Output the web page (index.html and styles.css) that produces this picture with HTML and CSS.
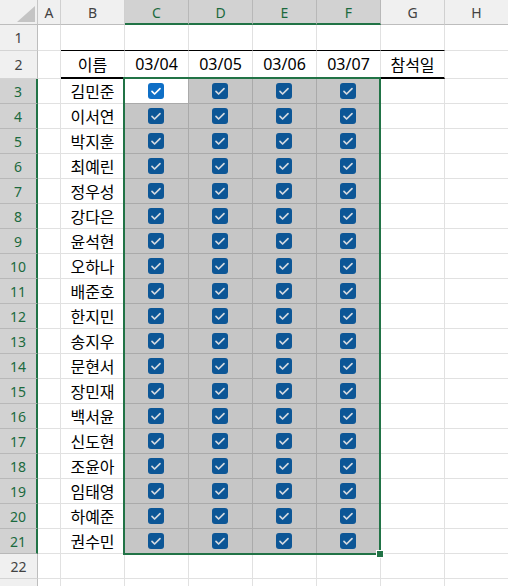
FILE: index.html
```html
<!DOCTYPE html>
<html lang="ko">
<head>
<meta charset="utf-8">
<title>출석부</title>
<link rel="stylesheet" href="styles.css">
</head>
<body>
<svg class="defs" aria-hidden="true">
  <symbol id="chk" viewBox="0 0 16 16">
    <rect class="box" x="0" y="0" width="16" height="16" rx="3"/>
    <path class="tick" d="M4 8.4 L6.6 11 L12 5.6"/>
  </symbol>
</svg>
<div class="sheet">
  <div class="corner"><svg class="tri" viewBox="0 0 18 16"><polygon points="18,0 18,16 0,16"/></svg></div>
  <div class="ch">A</div><div class="ch">B</div><div class="ch sel">C</div><div class="ch sel">D</div><div class="ch sel">E</div><div class="ch sel">F</div><div class="ch">G</div><div class="ch">H</div>

  <div class="rh">1</div><div class="c"></div><div class="c b1"></div><div class="c b1"></div><div class="c b1"></div><div class="c b1"></div><div class="c b1"></div><div class="c b1"></div><div class="c"></div>

  <div class="rh">2</div><div class="c"></div><div class="c hb">이름</div><div class="c hb">03/04</div><div class="c hb">03/05</div><div class="c hb">03/06</div><div class="c hb">03/07</div><div class="c hb">참석일</div><div class="c"></div>

  <div class="rh sel">3</div><div class="c"></div><div class="c">김민준</div><div class="c act"><svg class="cb"><use href="#chk"/></svg></div><div class="c s"><svg class="cb"><use href="#chk"/></svg></div><div class="c s"><svg class="cb"><use href="#chk"/></svg></div><div class="c s"><svg class="cb"><use href="#chk"/></svg></div><div class="c"></div><div class="c"></div>
  <div class="rh sel">4</div><div class="c"></div><div class="c">이서연</div><div class="c s"><svg class="cb"><use href="#chk"/></svg></div><div class="c s"><svg class="cb"><use href="#chk"/></svg></div><div class="c s"><svg class="cb"><use href="#chk"/></svg></div><div class="c s"><svg class="cb"><use href="#chk"/></svg></div><div class="c"></div><div class="c"></div>
  <div class="rh sel">5</div><div class="c"></div><div class="c">박지훈</div><div class="c s"><svg class="cb"><use href="#chk"/></svg></div><div class="c s"><svg class="cb"><use href="#chk"/></svg></div><div class="c s"><svg class="cb"><use href="#chk"/></svg></div><div class="c s"><svg class="cb"><use href="#chk"/></svg></div><div class="c"></div><div class="c"></div>
  <div class="rh sel">6</div><div class="c"></div><div class="c">최예린</div><div class="c s"><svg class="cb"><use href="#chk"/></svg></div><div class="c s"><svg class="cb"><use href="#chk"/></svg></div><div class="c s"><svg class="cb"><use href="#chk"/></svg></div><div class="c s"><svg class="cb"><use href="#chk"/></svg></div><div class="c"></div><div class="c"></div>
  <div class="rh sel">7</div><div class="c"></div><div class="c">정우성</div><div class="c s"><svg class="cb"><use href="#chk"/></svg></div><div class="c s"><svg class="cb"><use href="#chk"/></svg></div><div class="c s"><svg class="cb"><use href="#chk"/></svg></div><div class="c s"><svg class="cb"><use href="#chk"/></svg></div><div class="c"></div><div class="c"></div>
  <div class="rh sel">8</div><div class="c"></div><div class="c">강다은</div><div class="c s"><svg class="cb"><use href="#chk"/></svg></div><div class="c s"><svg class="cb"><use href="#chk"/></svg></div><div class="c s"><svg class="cb"><use href="#chk"/></svg></div><div class="c s"><svg class="cb"><use href="#chk"/></svg></div><div class="c"></div><div class="c"></div>
  <div class="rh sel">9</div><div class="c"></div><div class="c">윤석현</div><div class="c s"><svg class="cb"><use href="#chk"/></svg></div><div class="c s"><svg class="cb"><use href="#chk"/></svg></div><div class="c s"><svg class="cb"><use href="#chk"/></svg></div><div class="c s"><svg class="cb"><use href="#chk"/></svg></div><div class="c"></div><div class="c"></div>
  <div class="rh sel">10</div><div class="c"></div><div class="c">오하나</div><div class="c s"><svg class="cb"><use href="#chk"/></svg></div><div class="c s"><svg class="cb"><use href="#chk"/></svg></div><div class="c s"><svg class="cb"><use href="#chk"/></svg></div><div class="c s"><svg class="cb"><use href="#chk"/></svg></div><div class="c"></div><div class="c"></div>
  <div class="rh sel">11</div><div class="c"></div><div class="c">배준호</div><div class="c s"><svg class="cb"><use href="#chk"/></svg></div><div class="c s"><svg class="cb"><use href="#chk"/></svg></div><div class="c s"><svg class="cb"><use href="#chk"/></svg></div><div class="c s"><svg class="cb"><use href="#chk"/></svg></div><div class="c"></div><div class="c"></div>
  <div class="rh sel">12</div><div class="c"></div><div class="c">한지민</div><div class="c s"><svg class="cb"><use href="#chk"/></svg></div><div class="c s"><svg class="cb"><use href="#chk"/></svg></div><div class="c s"><svg class="cb"><use href="#chk"/></svg></div><div class="c s"><svg class="cb"><use href="#chk"/></svg></div><div class="c"></div><div class="c"></div>
  <div class="rh sel">13</div><div class="c"></div><div class="c">송지우</div><div class="c s"><svg class="cb"><use href="#chk"/></svg></div><div class="c s"><svg class="cb"><use href="#chk"/></svg></div><div class="c s"><svg class="cb"><use href="#chk"/></svg></div><div class="c s"><svg class="cb"><use href="#chk"/></svg></div><div class="c"></div><div class="c"></div>
  <div class="rh sel">14</div><div class="c"></div><div class="c">문현서</div><div class="c s"><svg class="cb"><use href="#chk"/></svg></div><div class="c s"><svg class="cb"><use href="#chk"/></svg></div><div class="c s"><svg class="cb"><use href="#chk"/></svg></div><div class="c s"><svg class="cb"><use href="#chk"/></svg></div><div class="c"></div><div class="c"></div>
  <div class="rh sel">15</div><div class="c"></div><div class="c">장민재</div><div class="c s"><svg class="cb"><use href="#chk"/></svg></div><div class="c s"><svg class="cb"><use href="#chk"/></svg></div><div class="c s"><svg class="cb"><use href="#chk"/></svg></div><div class="c s"><svg class="cb"><use href="#chk"/></svg></div><div class="c"></div><div class="c"></div>
  <div class="rh sel">16</div><div class="c"></div><div class="c">백서윤</div><div class="c s"><svg class="cb"><use href="#chk"/></svg></div><div class="c s"><svg class="cb"><use href="#chk"/></svg></div><div class="c s"><svg class="cb"><use href="#chk"/></svg></div><div class="c s"><svg class="cb"><use href="#chk"/></svg></div><div class="c"></div><div class="c"></div>
  <div class="rh sel">17</div><div class="c"></div><div class="c">신도현</div><div class="c s"><svg class="cb"><use href="#chk"/></svg></div><div class="c s"><svg class="cb"><use href="#chk"/></svg></div><div class="c s"><svg class="cb"><use href="#chk"/></svg></div><div class="c s"><svg class="cb"><use href="#chk"/></svg></div><div class="c"></div><div class="c"></div>
  <div class="rh sel">18</div><div class="c"></div><div class="c">조윤아</div><div class="c s"><svg class="cb"><use href="#chk"/></svg></div><div class="c s"><svg class="cb"><use href="#chk"/></svg></div><div class="c s"><svg class="cb"><use href="#chk"/></svg></div><div class="c s"><svg class="cb"><use href="#chk"/></svg></div><div class="c"></div><div class="c"></div>
  <div class="rh sel">19</div><div class="c"></div><div class="c">임태영</div><div class="c s"><svg class="cb"><use href="#chk"/></svg></div><div class="c s"><svg class="cb"><use href="#chk"/></svg></div><div class="c s"><svg class="cb"><use href="#chk"/></svg></div><div class="c s"><svg class="cb"><use href="#chk"/></svg></div><div class="c"></div><div class="c"></div>
  <div class="rh sel">20</div><div class="c"></div><div class="c">하예준</div><div class="c s"><svg class="cb"><use href="#chk"/></svg></div><div class="c s"><svg class="cb"><use href="#chk"/></svg></div><div class="c s"><svg class="cb"><use href="#chk"/></svg></div><div class="c s"><svg class="cb"><use href="#chk"/></svg></div><div class="c"></div><div class="c"></div>
  <div class="rh sel">21</div><div class="c"></div><div class="c">권수민</div><div class="c s"><svg class="cb"><use href="#chk"/></svg></div><div class="c s"><svg class="cb"><use href="#chk"/></svg></div><div class="c s"><svg class="cb"><use href="#chk"/></svg></div><div class="c s"><svg class="cb"><use href="#chk"/></svg></div><div class="c"></div><div class="c"></div>

  <div class="rh">22</div><div class="c"></div><div class="c"></div><div class="c"></div><div class="c"></div><div class="c"></div><div class="c"></div><div class="c"></div><div class="c"></div>
  <div class="rh"></div><div class="c"></div><div class="c"></div><div class="c"></div><div class="c"></div><div class="c"></div><div class="c"></div><div class="c"></div><div class="c"></div>

  <div class="selection"></div>
  <div class="handle"></div>
</div>
</body>
</html>
```

FILE: styles.css
```css
* { box-sizing: border-box; }
html, body { margin: 0; padding: 0; background: #fff; }
body { width: 508px; height: 586px; overflow: hidden; }

.defs { position: absolute; width: 0; height: 0; overflow: hidden; }

.sheet {
  position: relative;
  display: grid;
  grid-template-columns: 38px 23px repeat(7, 64px);
  grid-template-rows: 25px 26px 28px repeat(21, 25px);
  width: 509px;
  height: 586px;
  overflow: hidden;
  font-family: "Noto Sans", "Noto Sans CJK KR", sans-serif;
}

.corner {
  background: #f0f0f0;
  border-right: 1px solid #c6c6c6;
  border-bottom: 1px solid #bdbdbd;
  display: flex;
  align-items: flex-end;
  justify-content: flex-end;
  padding: 0 2px 2px 0;
}
.tri { width: 18px; height: 16px; display: block; }
.tri polygon { fill: #c4c4c4; }

.ch {
  background: #f0f0f0;
  border-right: 1px solid #d0d0d0;
  border-bottom: 1px solid #bdbdbd;
  display: flex;
  align-items: center;
  justify-content: center;
  font-family: "Noto Sans", sans-serif;
  font-size: 14px;
  color: #424242;
  padding-top: 1px;
}
.ch.sel {
  background: #d2d2d2;
  color: #1b6a3e;
  border-right-color: #b8b8b8;
  border-bottom: 2px solid #217346;
}

.rh {
  background: #f0f0f0;
  border-right: 1px solid #bdbdbd;
  border-bottom: 1px solid #d4d4d4;
  display: flex;
  align-items: center;
  justify-content: center;
  font-family: "Noto Sans", sans-serif;
  font-size: 14px;
  color: #424242;
}
.rh.sel {
  background: #d2d2d2;
  color: #1b6a3e;
  border-bottom-color: #b8b8b8;
  border-right: 2px solid #217346;
}

.c {
  border-right: 1px solid #e1e1e1;
  border-bottom: 1px solid #e1e1e1;
  display: flex;
  align-items: center;
  justify-content: center;
  font-size: 16px;
  color: #000;
  white-space: nowrap;
}
.c.b1 { border-bottom-color: #000; }
.c.hb { border-bottom: 2px solid #000; }
.c.s {
  background: #c6c6c6;
  border-right-color: #aaaaaa;
  border-bottom-color: #aaaaaa;
  --box: #0c5696;
  --tick: #d3d9e0;
}
.c.act {
  background: #fff;
  border-right-color: #aaaaaa;
  border-bottom-color: #aaaaaa;
  --box: #0f6fc6;
  --tick: #ffffff;
}

.cb { width: 16px; height: 16px; display: block; margin: -1px 2px 0 0; }
.box { fill: var(--box); }
.tick {
  fill: none;
  stroke: var(--tick);
  stroke-width: 1.7;
  stroke-linecap: round;
  stroke-linejoin: round;
}

.selection {
  position: absolute;
  left: 123px;
  top: 77px;
  width: 258px;
  height: 478px;
  border: 2px solid #217346;
  pointer-events: none;
}
.handle {
  position: absolute;
  left: 376px;
  top: 550px;
  width: 8px;
  height: 8px;
  background: #217346;
  border: 1px solid #fff;
}
```
